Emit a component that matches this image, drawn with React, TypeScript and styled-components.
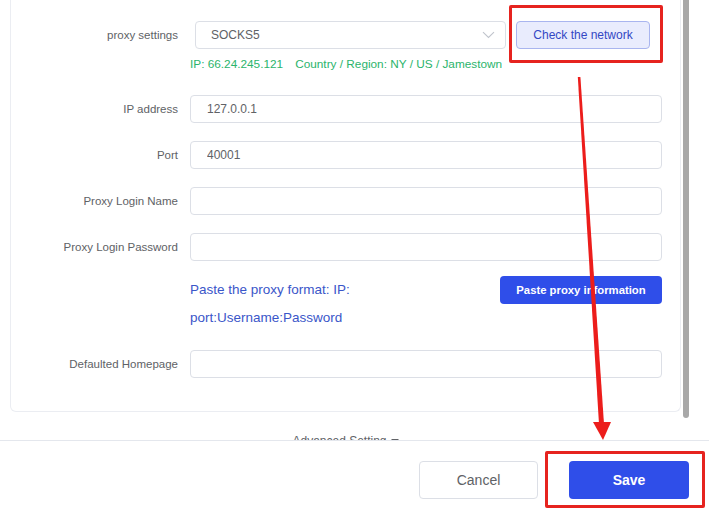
import React from "react";
import styled, { createGlobalStyle } from "styled-components";

const GlobalStyle = createGlobalStyle`
  html, body { margin: 0; padding: 0; background: #ffffff; }
  body { font-family: "Liberation Sans", Arial, sans-serif; }
  * { box-sizing: border-box; }
`;

const Page = styled.div`
  position: relative;
  width: 709px;
  height: 519px;
  overflow: hidden;
  display: flex;
  flex-direction: column;
  background: #fff;
`;

const ScrollArea = styled.div`
  height: 440px;
  overflow: hidden;
  display: flex;
  flex-shrink: 0;
`;

const ScrollContent = styled.div`
  width: 683px;
  padding: 0 2px 0 10px;
  display: flex;
  flex-direction: column;
`;

const ScrollTrack = styled.div`
  flex: 1;
`;

const ScrollThumb = styled.div`
  width: 6px;
  height: 418px;
  background: #a8a8a8;
  border-radius: 0 0 3px 3px;
`;

const Card = styled.div`
  display: flex;
  flex-direction: column;
  padding: 21px 18px 33px 0;
  border: 1px solid #ebedf2;
  border-top: none;
  border-radius: 0 0 6px 6px;
`;

const FormRow = styled.div<{ $top?: number }>`
  display: flex;
  align-items: flex-start;
  gap: 12px;
  margin-top: ${(p) => p.$top ?? 0}px;
`;

const Label = styled.div`
  width: 167px;
  flex-shrink: 0;
  text-align: right;
  font-size: 11.5px;
  line-height: 28px;
  color: #606266;
`;

const Control = styled.div`
  flex: 1;
  display: flex;
  flex-direction: column;
  min-width: 0;
`;

const TextInput = styled.input`
  width: 100%;
  height: 28px;
  border: 1px solid #dcdfe6;
  border-radius: 4px;
  padding: 0 16px;
  font-family: "Liberation Sans", Arial, sans-serif;
  font-size: 12px;
  color: #606266;
  background: #fff;
  outline: none;
`;

const SelectRow = styled.div`
  display: flex;
  align-items: center;
  gap: 10px;
`;

const SelectBox = styled.div`
  margin-left: 5px;
  width: 311px;
  height: 28px;
  border: 1px solid #dcdfe6;
  border-radius: 4px;
  padding: 0 10px 0 15px;
  display: flex;
  align-items: center;
  justify-content: space-between;
  font-size: 12px;
  color: #606266;
`;

const CheckButton = styled.button`
  width: 134px;
  height: 28px;
  border: 1px solid #a9b5ef;
  background: #e9ecfd;
  border-radius: 4px;
  color: #3347c4;
  font-family: "Liberation Sans", Arial, sans-serif;
  font-size: 12px;
  padding: 0;
`;

const InfoLine = styled.div`
  margin-top: 6px;
  display: flex;
  gap: 12px;
  font-size: 11.8px;
  line-height: 18px;
  color: #2bb46c;
`;

const PasteRow = styled.div`
  display: flex;
  align-items: flex-start;
  gap: 10px;
`;

const PasteText = styled.div`
  flex: 1;
  font-size: 13.5px;
  line-height: 28px;
  color: #3a56c9;
`;

const PrimaryButton = styled.button<{ $w: number; $h: number; $size: number }>`
  width: ${(p) => p.$w}px;
  height: ${(p) => p.$h}px;
  flex-shrink: 0;
  border: none;
  border-radius: 4px;
  background: #2f4ee9;
  color: #fff;
  font-family: "Liberation Sans", Arial, sans-serif;
  font-weight: 700;
  font-size: ${(p) => p.$size}px;
  padding: 0;
`;

const AdvancedToggle = styled.div`
  margin-top: 21px;
  display: flex;
  justify-content: center;
  align-items: center;
  gap: 4px;
  width: 671px;
  font-size: 12px;
  line-height: 16px;
  color: #606266;
`;

const Footer = styled.div`
  flex: 1;
  border-top: 1px solid #e4e7ed;
  display: flex;
  justify-content: flex-end;
  align-items: flex-start;
  gap: 31px;
  padding: 20px 20px 0 0;
`;

const CancelButton = styled.button`
  width: 119px;
  height: 38px;
  border: 1px solid #dcdfe6;
  border-radius: 4px;
  background: #fff;
  color: #606266;
  font-family: "Liberation Sans", Arial, sans-serif;
  font-size: 14px;
  padding: 0;
`;

const Highlight = styled.div<{ $x: number; $y: number; $w: number; $h: number }>`
  position: absolute;
  left: ${(p) => p.$x}px;
  top: ${(p) => p.$y}px;
  width: ${(p) => p.$w}px;
  height: ${(p) => p.$h}px;
  border: 3px solid #e6231f;
  border-radius: 2px;
  pointer-events: none;
`;

const Overlay = styled.svg`
  position: absolute;
  left: 0;
  top: 0;
  pointer-events: none;
`;

const Chevron = () => (
  <svg width="13" height="8" viewBox="0 0 13 8">
    <path d="M1 1.2 L6.5 6.5 L12 1.2" fill="none" stroke="#c0c4cc" strokeWidth="1.1" />
  </svg>
);

const Caret = () => (
  <svg width="8" height="6" viewBox="0 0 8 6">
    <path d="M0 1 L8 1 L4 5 Z" fill="#606266" />
  </svg>
);

export default function App() {
  return (
    <>
      <GlobalStyle />
      <Page>
        <ScrollArea>
          <ScrollContent>
            <Card>
              <FormRow>
                <Label>proxy settings</Label>
                <Control>
                  <SelectRow>
                    <SelectBox>
                      <span>SOCKS5</span>
                      <Chevron />
                    </SelectBox>
                    <CheckButton>Check the network</CheckButton>
                  </SelectRow>
                  <InfoLine>
                    <span>IP: 66.24.245.121</span>
                    <span>Country / Region: NY / US / Jamestown</span>
                  </InfoLine>
                </Control>
              </FormRow>
              <FormRow $top={22}>
                <Label>IP address</Label>
                <Control>
                  <TextInput readOnly defaultValue="127.0.0.1" />
                </Control>
              </FormRow>
              <FormRow $top={18}>
                <Label>Port</Label>
                <Control>
                  <TextInput readOnly defaultValue="40001" />
                </Control>
              </FormRow>
              <FormRow $top={18}>
                <Label>Proxy Login Name</Label>
                <Control>
                  <TextInput readOnly defaultValue="" />
                </Control>
              </FormRow>
              <FormRow $top={18}>
                <Label>Proxy Login Password</Label>
                <Control>
                  <TextInput readOnly defaultValue="" />
                </Control>
              </FormRow>
              <FormRow $top={15}>
                <Label />
                <Control>
                  <PasteRow>
                    <PasteText>Paste the proxy format: IP: port:Username:Password</PasteText>
                    <PrimaryButton $w={162} $h={28} $size={11.3}>
                      Paste proxy information
                    </PrimaryButton>
                  </PasteRow>
                </Control>
              </FormRow>
              <FormRow $top={18}>
                <Label>Defaulted Homepage</Label>
                <Control>
                  <TextInput readOnly defaultValue="" />
                </Control>
              </FormRow>
            </Card>
            <AdvancedToggle>
              <span>Advanced Setting</span>
              <Caret />
            </AdvancedToggle>
          </ScrollContent>
          <ScrollTrack>
            <ScrollThumb />
          </ScrollTrack>
        </ScrollArea>
        <Footer>
          <CancelButton>Cancel</CancelButton>
          <PrimaryButton $w={120} $h={38} $size={14}>
            Save
          </PrimaryButton>
        </Footer>
        <Highlight $x={509} $y={5} $w={154} $h={58} />
        <Highlight $x={545} $y={451} $w={160} $h={57} />
        <Overlay width="709" height="519" viewBox="0 0 709 519">
          <polygon points="577.8,77 580.4,77 604,424 599,424" fill="#ec1d1b" />
          <polygon points="593,422 611,422 603,440" fill="#ec1d1b" />
        </Overlay>
      </Page>
    </>
  );
}
